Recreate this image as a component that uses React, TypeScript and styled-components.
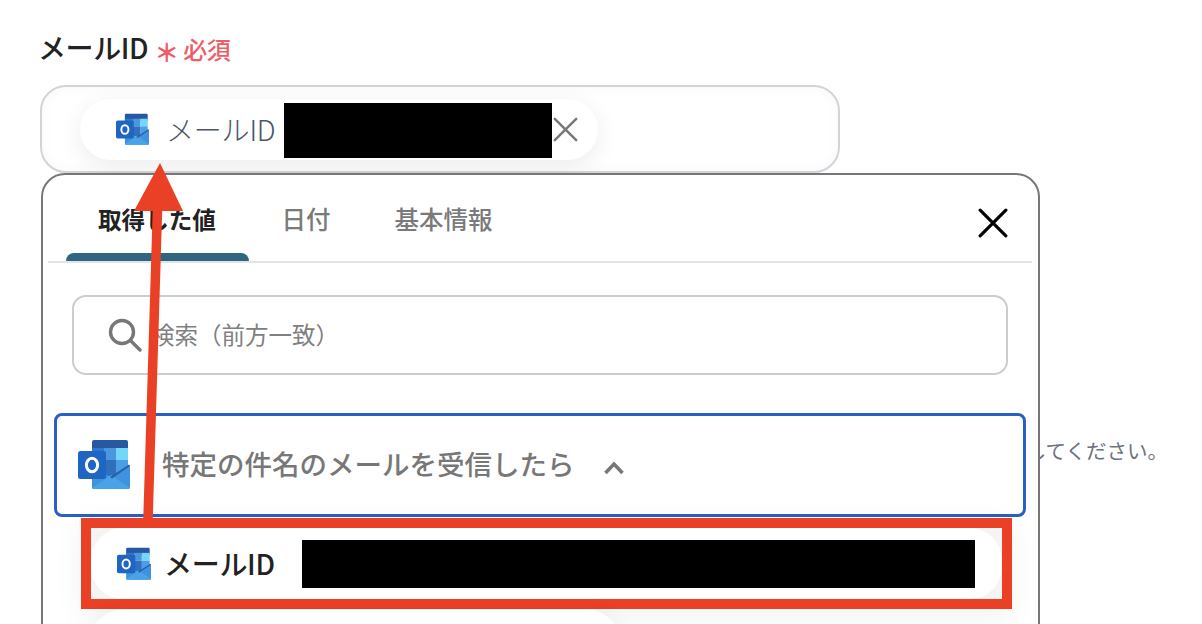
import styled, { createGlobalStyle } from 'styled-components';

const GlobalStyle = createGlobalStyle`
  html, body {
    margin: 0;
    height: 624px;
    overflow: hidden;
    background: #fff;
  }
  body {
    font-family: "Noto Sans CJK JP", "Noto Sans", sans-serif;
  }
`;

const OutlookIcon = ({ size }: { size: number }) => (
  <svg width={size} height={size} viewBox="0 0 52 50" style={{ flexShrink: 0 }}>
    <rect x="14" y="0" width="36" height="12" rx="2" fill="#28589f" />
    <rect x="14" y="8" width="12" height="12" fill="#2d79cf" />
    <rect x="26" y="8" width="12" height="12" fill="#4a97dd" />
    <rect x="38" y="8" width="12" height="12" fill="#74d6fb" />
    <rect x="14" y="20" width="12" height="16" fill="#1f63b5" />
    <rect x="26" y="20" width="12" height="16" fill="#2f6fbe" />
    <rect x="38" y="20" width="12" height="16" fill="#4a9fe4" />
    <path d="M14 24 L33 38 L51 25 L52 26 V47 a2 2 0 0 1 -2 2 H16 a2 2 0 0 1 -2 -2 Z" fill="#3f93de" />
    <path d="M14 48 L33 35 L52 48 a2 2 0 0 1 -2 1 H16 a2 2 0 0 1 -2 -1 Z" fill="#4aa3e6" />
    <path d="M51 24.5 L52 26 L34 38.5 L32 37 Z" fill="#2a5ea8" />
    <rect x="0" y="11" width="28" height="28" rx="2.5" fill="#1f66c4" />
    <ellipse cx="14" cy="25" rx="5.6" ry="6.8" fill="none" stroke="#fff" strokeWidth="3" />
  </svg>
);

const CrossIcon = ({ size, color, weight }: { size: number; color: string; weight: number }) => (
  <svg width={size} height={size} viewBox="0 0 28 28" style={{ flexShrink: 0 }}>
    <path d="M2 2 L26 26 M26 2 L2 26" stroke={color} strokeWidth={weight} strokeLinecap="round" fill="none" />
  </svg>
);

const App = () => {
  return (
    <Page>
      <GlobalStyle />
      <FieldLabel>
        メールID
        <Asterisk>＊</Asterisk>
        <Required>必須</Required>
      </FieldLabel>
      <FieldInput>
        <SelectedChip>
          <OutlookIcon size={33} />
          <SelectedText>メールID</SelectedText>
          <Redacted $width={268} $height={55} />
          <ChipRemove>
            <CrossIcon size={25} color="#777" weight={2.8} />
          </ChipRemove>
        </SelectedChip>
      </FieldInput>
      <Hint>してください。</Hint>

      <Popover>
        <TabBar>
          <Tab $active>取得した値</Tab>
          <Tab>日付</Tab>
          <Tab>基本情報</Tab>
          <CloseButton>
            <CrossIcon size={30} color="#000" weight={3} />
          </CloseButton>
        </TabBar>
        <SearchBox>
          <svg width="34" height="34" viewBox="0 0 34 34" fill="none">
            <circle cx="14" cy="14" r="11.5" stroke="#777" strokeWidth="3.4" />
            <path d="M23 23 L32 32" stroke="#777" strokeWidth="3.4" strokeLinecap="round" />
          </svg>
          <SearchPlaceholder>検索（前方一致）</SearchPlaceholder>
        </SearchBox>
        <TriggerGroup>
          <OutlookIcon size={52} />
          <TriggerTitle>特定の件名のメールを受信したら</TriggerTitle>
          <Chevron width="22" height="14" viewBox="0 0 22 14" fill="none">
            <path d="M2.5 12 L11 3 L19.5 12" stroke="#777" strokeWidth="3.6" />
          </Chevron>
        </TriggerGroup>
        <Highlight>
          <ValueChip>
            <OutlookIcon size={34} />
            <ValueText>メールID</ValueText>
            <Redacted $width={673} $height={48} />
          </ValueChip>
        </Highlight>
        <NextChip />
      </Popover>

      {/* annotation arrow, sits on top of everything */}
      <ArrowOverlay width="60" height="360" viewBox="0 0 60 360">
        <path d="M21 358 L30.5 48" stroke="#ea4025" strokeWidth="9.5" fill="none" />
        <polygon points="33,2 7,50 56,50" fill="#ea4025" />
      </ArrowOverlay>
    </Page>
  );
};

export default App;

const Page = styled.div`
  position: relative;
  width: 1202px;
  height: 624px;
  overflow: hidden;
  padding: 28px 0 0 40px;
  box-sizing: border-box;
`;

const FieldLabel = styled.div`
  display: flex;
  align-items: center;
  height: 37px;
  margin-left: -2px;
  font-size: 28px;
  font-weight: 500;
  color: #222;
  letter-spacing: -0.4px;
`;

const Asterisk = styled.span`
  width: 22px;
  margin-left: 6px;
  font-size: 25px;
  font-weight: 700;
  color: #ee5c68;
  position: relative;
  top: 4px;
  text-align: center;
  white-space: nowrap;
`;

const Required = styled.span`
  margin-left: 7px;
  font-size: 24px;
  font-weight: 500;
  color: #ee5c68;
  position: relative;
  top: 2px;
`;

const FieldInput = styled.div`
  box-sizing: border-box;
  width: 800px;
  height: 88px;
  margin-top: 20px;
  padding: 12px 0 0 38px;
  border: 2px solid #d0d5da;
  border-radius: 26px;
  box-shadow: inset 0 0 14px rgba(0, 0, 0, 0.03);
`;

const SelectedChip = styled.div`
  box-sizing: border-box;
  display: flex;
  align-items: center;
  width: 518px;
  height: 61px;
  padding-left: 36px;
  border-radius: 31px;
  background: #fff;
  box-shadow: 0 6px 24px rgba(0, 0, 0, 0.08);
`;

const SelectedText = styled.span`
  width: 118px;
  margin: 0 0 2px 17px;
  font-size: 28px;
  font-weight: 300;
  color: #4b5563;
  letter-spacing: -0.2px;
  white-space: nowrap;
`;

const ChipRemove = styled.span`
  margin-left: 1px;
  line-height: 0;
`;

const Redacted = styled.div<{ $width: number; $height: number }>`
  flex-shrink: 0;
  width: ${(props) => props.$width}px;
  height: ${(props) => props.$height}px;
  margin-top: 1px;
  background: #000;
`;

const Hint = styled.div`
  width: 1128px;
  margin-top: 262px;
  font-size: 20.5px;
  line-height: 30px;
  color: #6b7280;
  text-align: right;
  white-space: nowrap;
`;

const Popover = styled.div`
  position: absolute;
  top: 173px;
  left: 41px;
  box-sizing: border-box;
  width: 999px;
  height: 560px;
  padding: 0 6px 0 5px;
  border: 2px solid #777;
  border-radius: 24px;
  background: #fff;
`;

const TabBar = styled.div`
  position: relative;
  display: flex;
  gap: 1px;
  height: 86px;
  padding-left: 18px;
  border-bottom: 2px solid #e4e4e4;
`;

const Tab = styled.div<{ $active?: boolean }>`
  position: relative;
  padding: 27px ${(props) => (props.$active ? '33px 0 32px' : '31.5px 0')};
  font-size: ${(props) => (props.$active ? 23.6 : 24.5)}px;
  line-height: 34px;
  font-weight: ${(props) => (props.$active ? 700 : 500)};
  color: ${(props) => (props.$active ? '#222' : '#7a7a7a')};

  ${(props) =>
    props.$active &&
    `
    &::after {
      content: '';
      position: absolute;
      left: 0;
      right: 0;
      bottom: 0;
      height: 8px;
      border-radius: 8px 8px 0 0;
      background: #2e6580;
    }
  `}
`;

const CloseButton = styled.div`
  position: absolute;
  top: 33px;
  right: 24px;
  line-height: 0;
`;

const SearchBox = styled.div`
  box-sizing: border-box;
  display: flex;
  align-items: center;
  gap: 9px;
  width: 936px;
  height: 80px;
  margin: 32px 0 0 24px;
  padding-left: 34px;
  border: 2px solid #ccc;
  border-radius: 14px;
`;

const SearchPlaceholder = styled.span`
  margin-bottom: 2px;
  font-size: 23.5px;
  color: #808080;
  white-space: nowrap;
`;

const TriggerGroup = styled.div`
  box-sizing: border-box;
  display: flex;
  align-items: center;
  width: 972px;
  height: 104px;
  margin: 38px 0 0 6px;
  padding-left: 21px;
  border: 3px solid #2a5fc4;
  border-radius: 8px;
`;

const TriggerTitle = styled.span`
  margin: 0 0 4px 32px;
  font-size: 27.5px;
  font-weight: 500;
  color: #777;
  white-space: nowrap;
`;

const Chevron = styled.svg`
  margin: 5px 0 0 28px;
`;

const Highlight = styled.div`
  box-sizing: border-box;
  width: 931px;
  height: 91px;
  margin: 1px 0 0 33px;
  border: 10px solid #ea4025;
  background: #f4f4f4;
  box-shadow: 0 6px 28px rgba(0, 0, 0, 0.06);
`;

const ValueChip = styled.div`
  box-sizing: border-box;
  display: flex;
  align-items: center;
  height: 71px;
  padding-left: 26px;
  border-radius: 32px;
  background: #fff;
`;

const ValueText = styled.span`
  width: 138px;
  margin: 0 0 2px 13px;
  font-size: 28px;
  font-weight: 500;
  color: #222;
  letter-spacing: -0.3px;
  white-space: nowrap;
`;

const NextChip = styled.div`
  width: 530px;
  height: 70px;
  margin: 1px 0 0 42px;
  border-radius: 32px;
  background: #fff;
  box-shadow: 0 6px 24px rgba(0, 0, 0, 0.08);
`;

const ArrowOverlay = styled.svg`
  position: absolute;
  left: 127px;
  top: 161px;
`;
